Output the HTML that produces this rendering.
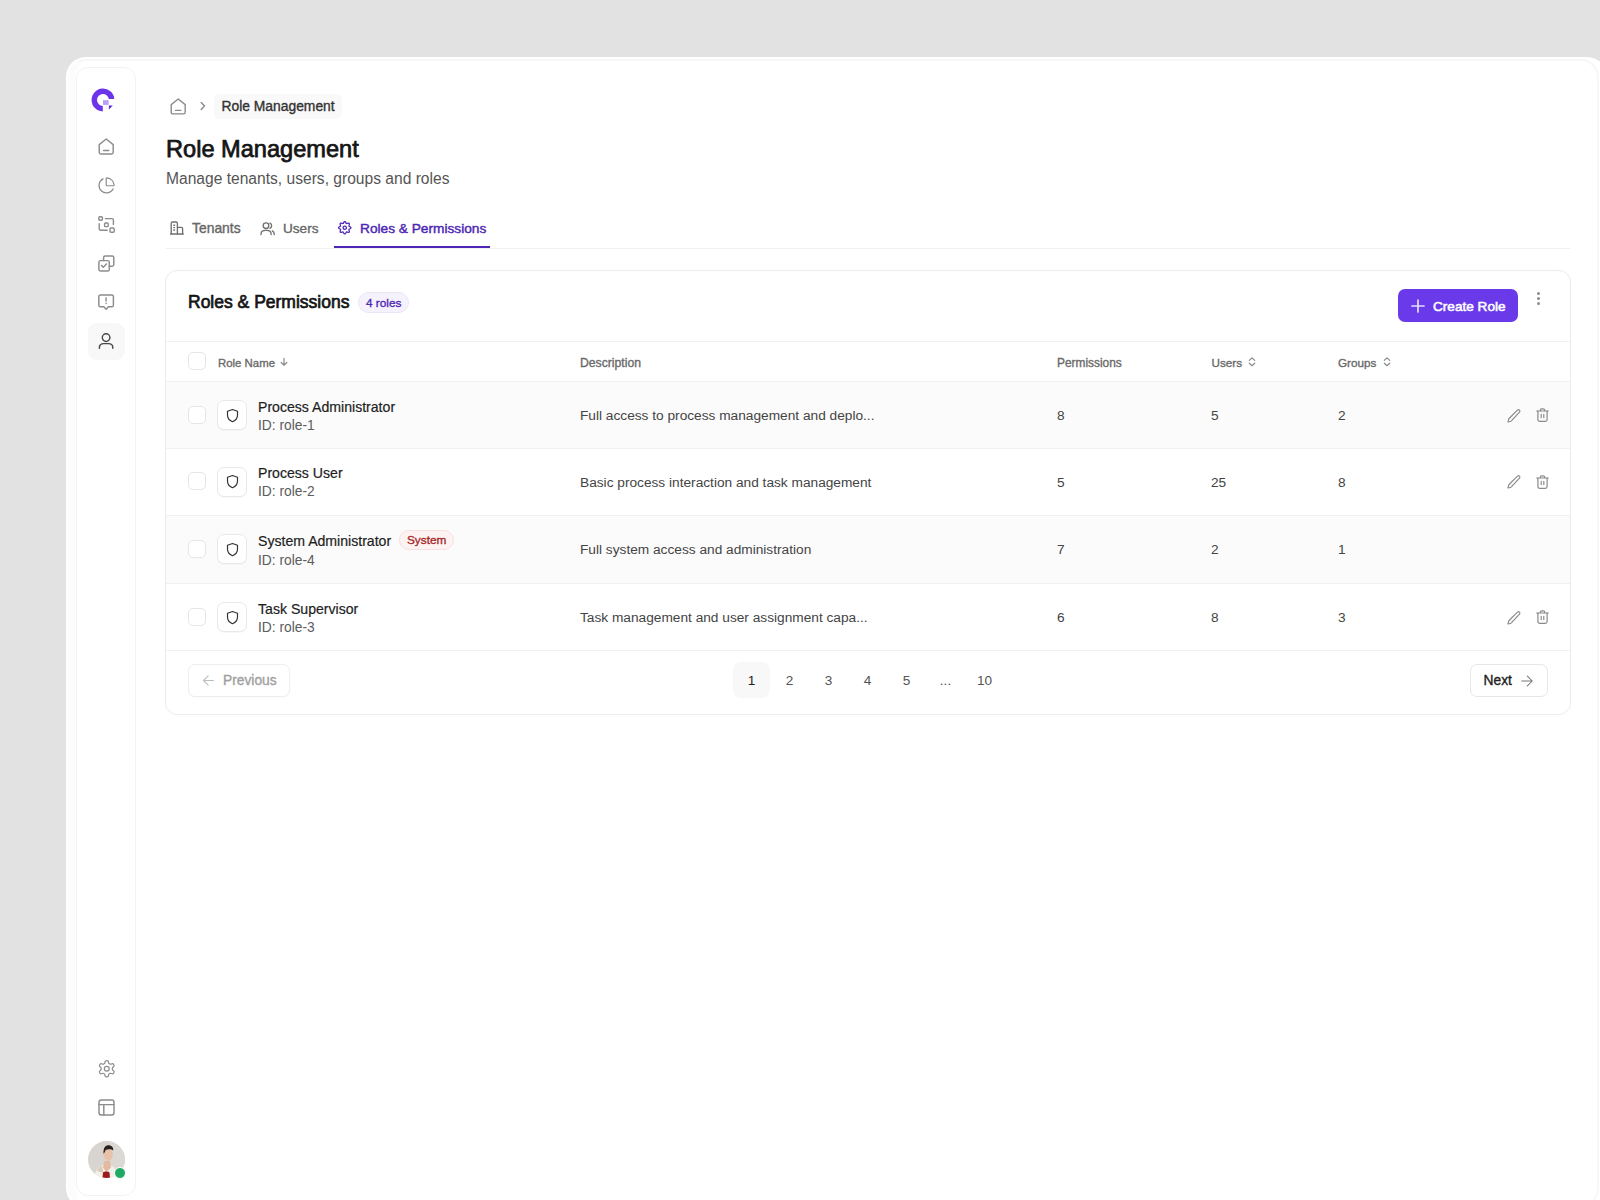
<!DOCTYPE html>
<html><head><meta charset="utf-8">
<style>
*{box-sizing:border-box;margin:0;padding:0}
html,body{width:1600px;height:1200px;overflow:hidden}
body{background:#e2e2e2;font-family:"Liberation Sans",sans-serif;position:relative;color:#222}
.abs{position:absolute}
.frame{position:absolute;left:66px;top:57px;width:1541px;height:1151px;background:#fff;border-radius:20px}
.frame2{position:absolute;left:68px;top:59px;width:1531px;height:1147px;border-radius:18px;border-top:2px solid #f7f7f7;border-right:2px solid #f7f7f7;border-left:8px solid #fcfcfc}
.side{position:absolute;left:76px;top:67px;width:60px;height:1129px;border:1px solid #f3f3f3;border-radius:12px;background:#fff}
.ic{position:absolute;fill:none;stroke:#8c8c8c;stroke-width:1.5;stroke-linecap:round;stroke-linejoin:round}
.t{position:absolute;white-space:nowrap}
.med{-webkit-text-stroke:0.35px currentColor}
.semi{-webkit-text-stroke:0.55px currentColor}
.cb{left:188px;width:18px;height:18px;border:1px solid #e6e6e6;border-radius:5px;background:#fff}
.th{font-size:11.9px;line-height:15px;color:#6a6a6a}
.sh{position:absolute;left:217px;width:30px;height:30px;border:1px solid #e9e9e9;border-radius:7px;background:#fff;box-shadow:0 1px 1px rgba(0,0,0,0.03)}
.nm{font-size:14.1px;line-height:17px;color:#1e1e1e;-webkit-text-stroke:0.2px currentColor}
.idt{font-size:13.8px;line-height:17px;color:#5c5c5c}
.td{font-size:13.7px;line-height:17px;color:#444}
.pg{top:672px;width:37px;text-align:center;font-size:13.6px;line-height:17px;color:#555}
</style></head>
<body>
<div class="frame"></div>
<div class="frame2"></div>
<div class="side"></div>

<!-- logo -->
<svg class="abs" style="left:90px;top:87px" width="26" height="26" viewBox="0 0 26 26">
  <path d="M24.35 11.9 A11.4 11.4 0 1 0 12.8 24.4 L12.8 19 A6 6 0 1 1 18.9 11.9 Z" fill="#6d34ea"/>
  <rect x="13" y="13.2" width="5.6" height="4.7" fill="#b99ff5"/>
  <path d="M18.9 18.6 L22.8 18.6 L18.9 22.6 Z" fill="#6326d6"/>
</svg>

<!-- sidebar nav -->
<div class="abs" style="left:88px;top:323px;width:37px;height:37px;border-radius:9px;background:#f8f8f8"></div>

<!-- home -->
<svg class="ic" style="left:98px;top:138px;stroke-width:1.45" width="17" height="17" viewBox="0 0 17 17"><path d="M1.2 6.6 L8.2 1 L15.2 6.6 V14.2 a1.7 1.7 0 0 1 -1.7 1.7 H2.9 a1.7 1.7 0 0 1 -1.7 -1.7 Z"/><path d="M5.6 12.4 H10.8"/></svg>
<!-- pie -->
<svg class="ic" style="left:96.1px;top:176.3px;stroke-width:1.5" width="20" height="20" viewBox="0 0 24 24"><path d="M21 12c.552 0 1.005-.449.95-.998a10 10 0 0 0-8.953-8.951c-.55-.055-.998.398-.998.95v8a1 1 0 0 0 1 1z" transform="translate(0.3 -0.3) scale(0.95) translate(0.6 0.6)"/><path d="M20.6 15.6 A9 9 0 1 1 8.4 3.4"/></svg>
<!-- scan/boxes -->
<svg class="ic" style="left:98px;top:216px;stroke-width:1.4" width="17" height="17" viewBox="0 0 17 17"><rect x="0.8" y="0.8" width="3.6" height="3.4" rx="0.9"/><rect x="6.6" y="7" width="3.6" height="3.6" rx="0.9"/><rect x="12" y="12" width="4.2" height="4.2" rx="0.9"/><path d="M7.4 2.6 H14 a1.4 1.4 0 0 1 1.4 1.4 V8.4"/><path d="M9.2 14.2 H2.6 a1.4 1.4 0 0 1 -1.4 -1.4 V7.8"/></svg>
<!-- copy check -->
<svg class="ic" style="left:98px;top:255px;stroke-width:1.45" width="17" height="17" viewBox="0 0 17 17"><rect x="0.9" y="5.6" width="10.4" height="10.4" rx="1.6"/><path d="M5.6 5.6 V2.6 a1.6 1.6 0 0 1 1.6 -1.6 H14.2 a1.6 1.6 0 0 1 1.6 1.6 V9.6 a1.6 1.6 0 0 1 -1.6 1.6 H11.3"/><path d="M3.6 10.6 L5.3 12.2 L8.4 9.1"/></svg>
<!-- message alert -->
<svg class="ic" style="left:98px;top:294px;stroke-width:1.45" width="17" height="17" viewBox="0 0 17 17"><path d="M2.4 1 H13.8 a1.6 1.6 0 0 1 1.6 1.6 V11.2 a1.6 1.6 0 0 1 -1.6 1.6 H10.4 L8.1 15.3 L5.8 12.8 H2.4 a1.6 1.6 0 0 1 -1.6 -1.6 V2.6 a1.6 1.6 0 0 1 1.6 -1.6 Z"/><path d="M8.1 4 V7"/><path d="M8.1 9.3 V9.4"/></svg>
<!-- user -->
<svg class="ic" style="left:98px;top:332px;stroke:#484848;stroke-width:1.45" width="17" height="17" viewBox="0 0 17 17"><circle cx="8.1" cy="5.6" r="3.8"/><path d="M1.4 16.2 V15.4 C1.4 13 3.4 11.6 5.8 11.6 H10.4 C12.8 11.6 14.8 13 14.8 15.4 V16.2"/></svg>
<!-- settings -->
<svg class="ic" style="left:96.5px;top:1059px;stroke-width:1.5" width="19.5" height="19.5" viewBox="0 0 24 24"><path d="M12.22 2h-.44a2 2 0 0 0-2 2v.18a2 2 0 0 1-1 1.73l-.43.25a2 2 0 0 1-2 0l-.15-.08a2 2 0 0 0-2.73.73l-.22.38a2 2 0 0 0 .73 2.73l.15.1a2 2 0 0 1 1 1.72v.51a2 2 0 0 1-1 1.74l-.15.09a2 2 0 0 0-.73 2.73l.22.38a2 2 0 0 0 2.73.73l.15-.08a2 2 0 0 1 2 0l.43.25a2 2 0 0 1 1 1.73V20a2 2 0 0 0 2 2h.44a2 2 0 0 0 2-2v-.18a2 2 0 0 1 1-1.73l.43-.25a2 2 0 0 1 2 0l.15.08a2 2 0 0 0 2.73-.73l.22-.39a2 2 0 0 0-.73-2.73l-.15-.08a2 2 0 0 1-1-1.74v-.5a2 2 0 0 1 1-1.74l.15-.09a2 2 0 0 0 .73-2.73l-.22-.38a2 2 0 0 0-2.73-.73l-.15.08a2 2 0 0 1-2 0l-.43-.25a2 2 0 0 1-1-1.73V4a2 2 0 0 0-2-2z"/><circle cx="12" cy="12" r="3"/></svg>
<!-- layout -->
<svg class="ic" style="left:98px;top:1099px;stroke-width:1.45" width="17" height="17" viewBox="0 0 17 17"><rect x="1" y="1" width="15" height="15" rx="2.2"/><path d="M1 5.6 H16"/><path d="M5.8 5.6 V16"/></svg>
<!-- avatar -->
<svg class="abs" style="left:88px;top:1141px" width="37" height="37" viewBox="0 0 37 37">
  <defs><clipPath id="av"><circle cx="18.5" cy="18.5" r="18.5"/></clipPath></defs>
  <g clip-path="url(#av)">
    <rect width="37" height="37" fill="#d8d5d1"/>
    <rect x="20" width="17" height="37" fill="#dcd8d4"/>
    <path d="M6 37 C7 30 10 26 14 24.5 L23 24.5 C27 26 29.5 30 30 37 Z" fill="#f3f0ec"/>
    <path d="M9 30 C10 27 12 25.5 14 25 L15.5 32 Z" fill="#d9cdb8"/>
    <path d="M16.5 20 L22 20 L23 26.5 L18.5 31 L15 26.5 Z" fill="#e3b9a0"/>
    <ellipse cx="20.3" cy="13.8" rx="4.6" ry="6" fill="#e8c2a8"/>
    <path d="M15.6 13 C15 6.5 17.5 4.2 20.6 4.2 C23.8 4.2 25.6 6.6 25.2 9.4 C23.5 8 20 7.8 17.8 8.8 C17 10.5 16.6 12 15.6 13 Z" fill="#2a211f"/>
    <path d="M14.5 37 L15 31.5 C16.5 30.2 20 30.2 21.5 31.5 L22 37 Z" fill="#9b1a1c"/>
  </g>
</svg>
<div class="abs" style="left:114px;top:1167px;width:12px;height:12px;border-radius:50%;background:#1fa866;border:1.5px solid #fff"></div>

<!-- breadcrumb -->
<svg class="ic" style="left:170px;top:97.5px;stroke-width:1.4" width="17" height="17" viewBox="0 0 17 17"><path d="M1.2 6.6 L8.2 1 L15.2 6.6 V14.2 a1.7 1.7 0 0 1 -1.7 1.7 H2.9 a1.7 1.7 0 0 1 -1.7 -1.7 Z"/><path d="M5.6 12.4 H10.8"/></svg>
<svg class="ic" style="left:197px;top:100px" width="12" height="12" viewBox="0 0 12 12"><path d="M4.2 2.5 L7.5 6 L4.2 9.5"/></svg>
<div class="abs" style="left:214px;top:94px;width:128px;height:25px;border-radius:6px;background:#f9f9f9"></div>
<div class="t med" style="left:221.5px;top:98px;font-size:13.85px;line-height:17px;color:#333">Role Management</div>

<!-- title -->
<div class="t" style="left:166px;top:134px;font-size:23.6px;line-height:30px;color:#151515;-webkit-text-stroke:0.75px #151515">Role Management</div>
<div class="t" style="left:166px;top:169px;font-size:15.6px;line-height:20px;color:#555">Manage tenants, users, groups and roles</div>

<!-- tabs -->
<div class="abs" style="left:166px;top:248px;width:1404px;height:1px;background:#efefef"></div>
<div class="abs" style="left:334px;top:246px;width:156px;height:2px;background:#4e28b4"></div>
<svg class="ic" style="left:170px;top:221px;stroke:#707070;stroke-width:1.35" width="14" height="14" viewBox="0 0 14 14"><path d="M1.2 13 V2.4 a1.4 1.4 0 0 1 1.4 -1.4 H6 a1.4 1.4 0 0 1 1.4 1.4 V13"/><path d="M7.4 6.3 H11.4 a1.2 1.2 0 0 1 1.2 1.2 V13"/><path d="M0.6 13 H13.2"/><path d="M3.8 4.2 H4.6 M3.8 6.6 H4.6 M3.8 9 H4.6"/></svg>
<div class="t med" style="left:192px;top:220px;font-size:13.9px;line-height:17px;color:#666">Tenants</div>
<svg class="ic" style="left:260px;top:221.5px;stroke:#707070;stroke-width:1.35" width="15" height="14" viewBox="0 0 15 14"><circle cx="6" cy="3.7" r="2.8"/><path d="M9.9 1.1 a2.8 2.8 0 0 1 0 5.2"/><path d="M1 12.6 V12 C1 9.7 3 8.3 5.4 8.3 H6.7 C9.1 8.3 11.1 9.7 11.1 12 V12.6"/><path d="M12.3 8.8 C13.5 9.4 14.2 10.5 14.2 11.8 V12.6"/></svg>
<div class="t med" style="left:283px;top:220px;font-size:13.6px;line-height:17px;color:#666">Users</div>
<svg class="ic" style="left:337px;top:220.2px;stroke:#4e28b4;stroke-width:2" width="15.5" height="15.5" viewBox="0 0 24 24"><path d="M12.0 2.4L12.6 2.6L13.2 3.2L13.6 3.9L14.0 4.6L14.3 5.2L14.7 5.5L15.2 5.5L15.8 5.4L16.6 5.1L17.4 4.9L18.2 4.9L18.8 5.2L19.1 5.8L19.1 6.6L18.9 7.4L18.6 8.2L18.5 8.8L18.5 9.3L18.8 9.7L19.4 10.0L20.1 10.4L20.8 10.8L21.4 11.4L21.6 12.0L21.4 12.6L20.8 13.2L20.1 13.6L19.4 14.0L18.8 14.3L18.5 14.7L18.5 15.2L18.6 15.8L18.9 16.6L19.1 17.4L19.1 18.2L18.8 18.8L18.2 19.1L17.4 19.1L16.6 18.9L15.8 18.6L15.2 18.5L14.7 18.5L14.3 18.8L14.0 19.4L13.6 20.1L13.2 20.8L12.6 21.4L12.0 21.6L11.4 21.4L10.8 20.8L10.4 20.1L10.0 19.4L9.7 18.8L9.3 18.5L8.8 18.5L8.2 18.6L7.4 18.9L6.6 19.1L5.8 19.1L5.2 18.8L4.9 18.2L4.9 17.4L5.1 16.6L5.4 15.8L5.5 15.2L5.5 14.7L5.2 14.3L4.6 14.0L3.9 13.6L3.2 13.2L2.6 12.6L2.4 12.0L2.6 11.4L3.2 10.8L3.9 10.4L4.6 10.0L5.2 9.7L5.5 9.3L5.5 8.8L5.4 8.2L5.1 7.4L4.9 6.6L4.9 5.8L5.2 5.2L5.8 4.9L6.6 4.9L7.4 5.1L8.2 5.4L8.8 5.5L9.3 5.5L9.7 5.2L10.0 4.6L10.4 3.9L10.8 3.2L11.4 2.6Z"/><circle cx="12" cy="12" r="2.6"/></svg>
<div class="t" style="left:360px;top:220px;font-size:13.7px;line-height:17px;color:#4e28b4;-webkit-text-stroke:0.45px #4e28b4">Roles &amp; Permissions</div>

<!-- card -->
<div class="abs" style="left:165px;top:270px;width:1406px;height:445px;border:1px solid #ececec;border-radius:12px;background:#fff;overflow:hidden">
  <div class="abs" style="left:0;top:70px;width:100%;height:1px;background:#f0f0f0"></div>
  <div class="abs" style="left:0;top:110px;width:100%;height:1px;background:#f0f0f0"></div>
  <div class="abs" style="left:0;top:111px;width:100%;height:66px;background:#fbfbfb"></div>
  <div class="abs" style="left:0;top:177px;width:100%;height:1px;background:#f0f0f0"></div>
  <div class="abs" style="left:0;top:244px;width:100%;height:1px;background:#f0f0f0"></div>
  <div class="abs" style="left:0;top:245px;width:100%;height:67px;background:#fbfbfb"></div>
  <div class="abs" style="left:0;top:312px;width:100%;height:1px;background:#f0f0f0"></div>
  <div class="abs" style="left:0;top:379px;width:100%;height:1px;background:#f0f0f0"></div>
</div>
<div class="t" style="left:188px;top:292px;font-size:17.5px;line-height:21px;color:#151515;-webkit-text-stroke:0.7px #151515">Roles &amp; Permissions</div>
<div class="abs" style="left:358px;top:292px;width:51px;height:21px;border-radius:11px;background:#f5f2fd;border:1px solid #ebe5fa"></div>
<div class="t med" style="left:366px;top:296px;font-size:11.8px;line-height:15px;color:#4e28b4">4 roles</div>

<div class="abs" style="left:1398px;top:289px;width:120px;height:33px;border-radius:7px;background:#6a39ea"></div>
<svg class="ic" style="left:1411px;top:299px;stroke:#e6dcff;stroke-width:1.7" width="14" height="14" viewBox="0 0 14 14"><path d="M7 1 V13 M1 7 H13"/></svg>
<div class="t semi" style="left:1433px;top:298px;font-size:13.6px;line-height:17px;color:#fff">Create Role</div>
<div class="abs" style="left:1536.5px;top:292px;width:3px;height:3px;border-radius:50%;background:#8c8c8c"></div>
<div class="abs" style="left:1536.5px;top:297px;width:3px;height:3px;border-radius:50%;background:#8c8c8c"></div>
<div class="abs" style="left:1536.5px;top:302px;width:3px;height:3px;border-radius:50%;background:#8c8c8c"></div>

<!-- header row -->
<div class="abs cb" style="top:352px"></div>
<div class="t med th" style="left:218px;top:355.5px;font-size:11.4px">Role Name</div>
<svg class="ic" style="left:279px;top:357px;stroke:#8a8a8a;stroke-width:1.2" width="10" height="10" viewBox="0 0 10 10"><path d="M5 1.3 V8.2 M2.2 5.5 L5 8.2 L7.8 5.5"/></svg>
<div class="t med th" style="left:580px;top:355.5px;font-size:12.2px">Description</div>
<div class="t med th" style="left:1057px;top:355.5px">Permissions</div>
<div class="t med th" style="left:1211.5px;top:354.5px;font-size:11.7px">Users</div>
<svg class="ic" style="left:1247.5px;top:357px;stroke:#8a8a8a;stroke-width:1.2" width="8" height="10" viewBox="0 0 8 10"><path d="M1.3 3.4 L4 0.9 L6.7 3.4 M1.3 6.2 L4 8.7 L6.7 6.2"/></svg>
<div class="t med th" style="left:1338px;top:354.5px;font-size:11.7px">Groups</div>
<svg class="ic" style="left:1382.5px;top:357px;stroke:#8a8a8a;stroke-width:1.2" width="8" height="10" viewBox="0 0 8 10"><path d="M1.3 3.4 L4 0.9 L6.7 3.4 M1.3 6.2 L4 8.7 L6.7 6.2"/></svg>
<div class="abs cb" style="top:405.5px"></div>
<div class="sh" style="top:400.0px"></div>
<svg class="ic" style="left:224.5px;top:407.5px;stroke:#333;stroke-width:1.9" width="15" height="15" viewBox="0 0 24 24"><path d="M12 2.4 L20 5.3 V11.6 C20 16.4 16.6 20 12 21.9 C7.4 20 4 16.4 4 11.6 V5.3 Z"/></svg>
<div class="t nm" style="left:258px;top:398.5px">Process Administrator</div>
<div class="t idt" style="left:258px;top:416.5px">ID: role-1</div>
<div class="t td" style="left:580px;top:407.0px">Full access to process management and deplo...</div>
<div class="t td" style="left:1057px;top:407.0px">8</div>
<div class="t td" style="left:1211px;top:407.0px">5</div>
<div class="t td" style="left:1338px;top:407.0px">2</div>
<svg class="ic" style="left:1506.2px;top:407.5px;stroke:#8a8a8a;stroke-width:1.75" width="16" height="16" viewBox="0 0 24 24"><path d="M20.2 6.2 a2.1 2.1 0 0 0 -3 -3 L4.6 15.8 a2 2 0 0 0 -.5 .8 l-1.1 3.8 a.4 .4 0 0 0 .5 .5 l3.8 -1.1 a2 2 0 0 0 .8 -.5 Z"/></svg>
<svg class="ic" style="left:1535.5px;top:408.3px;stroke:#8a8a8a;stroke-width:1.2" width="13" height="14" viewBox="0 0 13 14"><path d="M4.3 2.7 V2.3 a1.5 1.5 0 0 1 1.5 -1.5 H7.2 a1.5 1.5 0 0 1 1.5 1.5 V2.7"/><path d="M0.7 3 H12.3"/><path d="M1.9 3 V11.5 a1.8 1.8 0 0 0 1.8 1.8 H9.3 a1.8 1.8 0 0 0 1.8 -1.8 V3"/><path d="M5.2 6.4 V9.6 M7.8 6.4 V9.6"/></svg>
<div class="abs cb" style="top:472.0px"></div>
<div class="sh" style="top:466.5px"></div>
<svg class="ic" style="left:224.5px;top:474.0px;stroke:#333;stroke-width:1.9" width="15" height="15" viewBox="0 0 24 24"><path d="M12 2.4 L20 5.3 V11.6 C20 16.4 16.6 20 12 21.9 C7.4 20 4 16.4 4 11.6 V5.3 Z"/></svg>
<div class="t nm" style="left:258px;top:465.0px">Process User</div>
<div class="t idt" style="left:258px;top:483.0px">ID: role-2</div>
<div class="t td" style="left:580px;top:473.5px">Basic process interaction and task management</div>
<div class="t td" style="left:1057px;top:473.5px">5</div>
<div class="t td" style="left:1211px;top:473.5px">25</div>
<div class="t td" style="left:1338px;top:473.5px">8</div>
<svg class="ic" style="left:1506.2px;top:474.0px;stroke:#8a8a8a;stroke-width:1.75" width="16" height="16" viewBox="0 0 24 24"><path d="M20.2 6.2 a2.1 2.1 0 0 0 -3 -3 L4.6 15.8 a2 2 0 0 0 -.5 .8 l-1.1 3.8 a.4 .4 0 0 0 .5 .5 l3.8 -1.1 a2 2 0 0 0 .8 -.5 Z"/></svg>
<svg class="ic" style="left:1535.5px;top:474.8px;stroke:#8a8a8a;stroke-width:1.2" width="13" height="14" viewBox="0 0 13 14"><path d="M4.3 2.7 V2.3 a1.5 1.5 0 0 1 1.5 -1.5 H7.2 a1.5 1.5 0 0 1 1.5 1.5 V2.7"/><path d="M0.7 3 H12.3"/><path d="M1.9 3 V11.5 a1.8 1.8 0 0 0 1.8 1.8 H9.3 a1.8 1.8 0 0 0 1.8 -1.8 V3"/><path d="M5.2 6.4 V9.6 M7.8 6.4 V9.6"/></svg>
<div class="abs cb" style="top:539.5px"></div>
<div class="sh" style="top:534.0px"></div>
<svg class="ic" style="left:224.5px;top:541.5px;stroke:#333;stroke-width:1.9" width="15" height="15" viewBox="0 0 24 24"><path d="M12 2.4 L20 5.3 V11.6 C20 16.4 16.6 20 12 21.9 C7.4 20 4 16.4 4 11.6 V5.3 Z"/></svg>
<div class="t nm" style="left:258px;top:532.5px">System Administrator</div>
<div class="t idt" style="left:258px;top:551.5px">ID: role-4</div>
<div class="abs" style="left:399px;top:529.5px;width:55px;height:20px;border-radius:10px;background:#fdf3f3;border:1px solid #f8e0e0"></div>
<div class="t med" style="left:407px;top:533.0px;font-size:11.8px;line-height:15px;color:#a5282b">System</div>
<div class="t td" style="left:580px;top:541.0px">Full system access and administration</div>
<div class="t td" style="left:1057px;top:541.0px">7</div>
<div class="t td" style="left:1211px;top:541.0px">2</div>
<div class="t td" style="left:1338px;top:541.0px">1</div>
<div class="abs cb" style="top:607.5px"></div>
<div class="sh" style="top:602.0px"></div>
<svg class="ic" style="left:224.5px;top:609.5px;stroke:#333;stroke-width:1.9" width="15" height="15" viewBox="0 0 24 24"><path d="M12 2.4 L20 5.3 V11.6 C20 16.4 16.6 20 12 21.9 C7.4 20 4 16.4 4 11.6 V5.3 Z"/></svg>
<div class="t nm" style="left:258px;top:600.5px">Task Supervisor</div>
<div class="t idt" style="left:258px;top:618.5px">ID: role-3</div>
<div class="t td" style="left:580px;top:609.0px">Task management and user assignment capa...</div>
<div class="t td" style="left:1057px;top:609.0px">6</div>
<div class="t td" style="left:1211px;top:609.0px">8</div>
<div class="t td" style="left:1338px;top:609.0px">3</div>
<svg class="ic" style="left:1506.2px;top:609.5px;stroke:#8a8a8a;stroke-width:1.75" width="16" height="16" viewBox="0 0 24 24"><path d="M20.2 6.2 a2.1 2.1 0 0 0 -3 -3 L4.6 15.8 a2 2 0 0 0 -.5 .8 l-1.1 3.8 a.4 .4 0 0 0 .5 .5 l3.8 -1.1 a2 2 0 0 0 .8 -.5 Z"/></svg>
<svg class="ic" style="left:1535.5px;top:610.3px;stroke:#8a8a8a;stroke-width:1.2" width="13" height="14" viewBox="0 0 13 14"><path d="M4.3 2.7 V2.3 a1.5 1.5 0 0 1 1.5 -1.5 H7.2 a1.5 1.5 0 0 1 1.5 1.5 V2.7"/><path d="M0.7 3 H12.3"/><path d="M1.9 3 V11.5 a1.8 1.8 0 0 0 1.8 1.8 H9.3 a1.8 1.8 0 0 0 1.8 -1.8 V3"/><path d="M5.2 6.4 V9.6 M7.8 6.4 V9.6"/></svg>
<!-- footer -->
<div class="abs" style="left:188px;top:664px;width:102px;height:33px;border:1px solid #eeeeee;border-radius:7px;background:#fff;box-shadow:0 1px 1px rgba(0,0,0,0.02)"></div>
<svg class="ic" style="left:199.5px;top:672px;stroke:#bdbdbd;stroke-width:1.5" width="17" height="17" viewBox="0 0 24 24"><path d="M19 12 H5 M11.5 5.5 L5 12 L11.5 18.5"/></svg>
<div class="t med" style="left:223px;top:672px;font-size:13.8px;line-height:17px;color:#a0a0a0">Previous</div>
<div class="abs" style="left:733px;top:662px;width:37px;height:36px;border-radius:8px;background:#f8f8f8"></div>
<div class="t pg" style="left:733px;width:37px;color:#222">1</div>
<div class="t pg" style="left:771px">2</div>
<div class="t pg" style="left:810px">3</div>
<div class="t pg" style="left:849px">4</div>
<div class="t pg" style="left:888px">5</div>
<div class="t pg" style="left:927px">...</div>
<div class="t pg" style="left:966px">10</div>
<div class="abs" style="left:1470px;top:664px;width:78px;height:33px;border:1px solid #e6e6e6;border-radius:7px;background:#fff"></div>
<div class="t med" style="left:1483.5px;top:672px;font-size:13.8px;line-height:17px;color:#222">Next</div>
<svg class="ic" style="left:1518px;top:671.5px;stroke:#777;stroke-width:1.4" width="18" height="18" viewBox="0 0 24 24"><path d="M5 12 H19 M12.5 5.5 L19 12 L12.5 18.5"/></svg>
</body></html>
